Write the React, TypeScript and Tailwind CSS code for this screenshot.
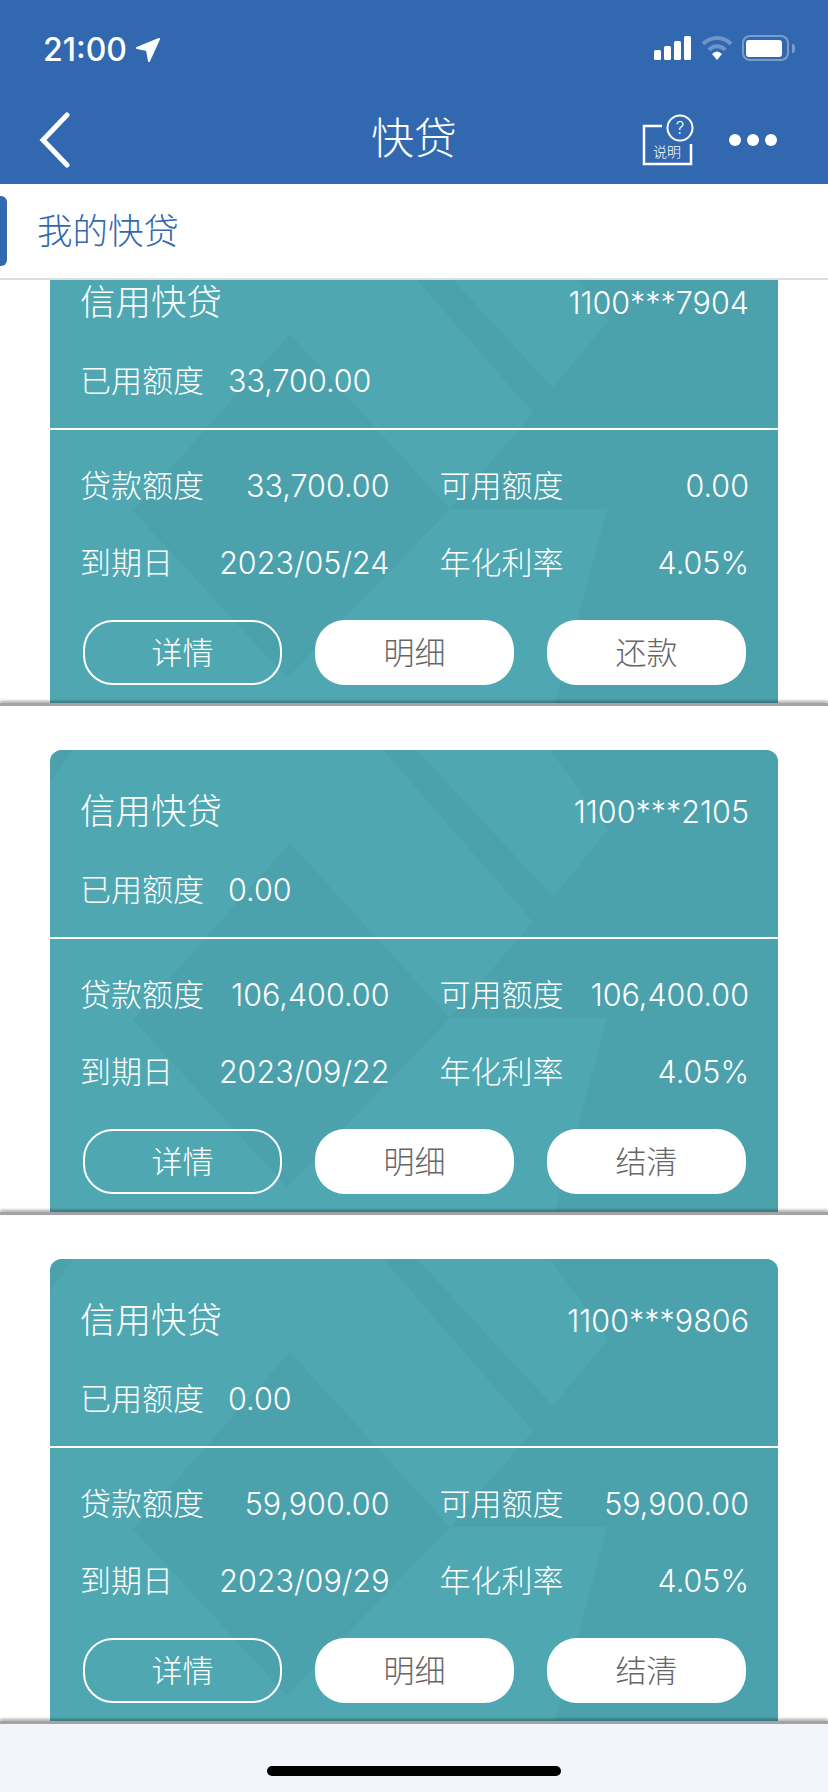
const FONT = "font-['Liberation_Sans','Noto_Sans_CJK_SC',sans-serif]"
const NUM = "font-['Inter','Noto_Sans_CJK_SC',sans-serif] font-light text-[30.5px] pb-[3px]"

const LOANS = [
  { account: '1100***7904', used: '33,700.00', limit: '33,700.00', available: '0.00', due: '2023/05/24', action: '还款' },
  { account: '1100***2105', used: '0.00', limit: '106,400.00', available: '106,400.00', due: '2023/09/22', action: '结清' },
  { account: '1100***9806', used: '0.00', limit: '59,900.00', available: '59,900.00', due: '2023/09/29', action: '结清' },
]

export default function App() {
  return (
    <div className={`w-[828px] h-[1792px] flex flex-col overflow-hidden bg-white ${FONT}`}>
      <header className="relative z-10 h-[184px] shrink-0 bg-[#3268b0] text-white">
        <StatusBar />
        <NavBar />
      </header>

      <div className="relative z-10 h-[96px] shrink-0 flex items-center bg-white border-b-2 border-[#dedede]">
        <span className="w-[7px] h-[70px] rounded-r-md bg-[#3268b0]" />
        <span className="ml-[30px] pt-[3px] text-[35.5px] font-light text-[#3268b0]">我的快贷</span>
      </div>

      <main className="flex-1 overflow-hidden">
        <div className="-mt-[39px]">
          {LOANS.map((loan) => (
            <LoanCard key={loan.account} {...loan} />
          ))}
        </div>
      </main>

      <footer className="relative z-10 h-[68px] shrink-0 bg-[#f2f6fa] pt-[42px] flex justify-center">
        <span className="w-[294px] h-[10px] rounded-full bg-black" />
      </footer>
    </div>
  )
}

function StatusBar() {
  return (
    <div className="h-[100px] flex items-start justify-between pl-[43px] pr-[33px] pt-[32px]">
      <div className="flex items-center gap-[8px]">
        <span className="font-['Inter'] text-[32px] leading-[36px] font-medium">21:00</span>
        <svg width="26" height="26" viewBox="0 0 26 26" fill="white" stroke="white" strokeWidth="2" strokeLinejoin="round">
          <path d="M2 11 L24 2 L14 24 L12 13 Z" />
        </svg>
      </div>
      <div className="flex items-center gap-[9px] pt-[3px]">
        <svg width="38" height="24" viewBox="0 0 38 24" fill="white">
          <rect x="0" y="14" width="7" height="10" rx="1.5" />
          <rect x="10" y="10" width="7" height="14" rx="1.5" />
          <rect x="20" y="5" width="7" height="19" rx="1.5" />
          <rect x="30" y="0" width="7" height="24" rx="1.5" />
        </svg>
        <svg width="32" height="24" viewBox="0 0 32 24" fill="none">
          <path d="M2 8 C10 0 22 0 30 8" stroke="white" strokeOpacity="0.3" strokeWidth="4" />
          <path d="M8 14 C12 9 20 9 24 14" stroke="white" strokeOpacity="0.3" strokeWidth="4" />
          <path d="M11 18 Q16 13 21 18 L16 24 Z" fill="white" />
        </svg>
        <div className="flex items-center gap-[3px]">
          <div className="w-[47px] h-[26px] rounded-[8px] border-2 border-white/35 flex items-center px-[2px]">
            <span className="w-[36px] h-[17px] rounded-[3px] bg-white" />
          </div>
          <span className="w-[3px] h-[9px] rounded-r-sm bg-white/35" />
        </div>
      </div>
    </div>
  )
}

function NavBar() {
  return (
    <div className="relative h-[84px]">
      <svg className="absolute left-[39px] top-[12px]" width="32" height="56" viewBox="0 0 32 56" fill="none" stroke="white" strokeWidth="5" strokeLinecap="round">
        <path d="M28 3 L4 28 L28 53" />
      </svg>
      <h1 className="text-center text-[43px] leading-[78px] font-light">快贷</h1>
      <svg className="absolute left-[642px] top-[13px]" width="54" height="54" viewBox="0 0 54 54" fill="none" stroke="white">
        <path d="M20 13 H2 V51 H49 V31" strokeWidth="2.5" />
        <circle cx="38" cy="15" r="12.5" strokeWidth="2" />
        <text x="38" y="21" textAnchor="middle" fontSize="17" fontWeight="300" fontFamily="Inter" fill="white" stroke="none">?</text>
        <text x="11" y="44" fontSize="14" fontWeight="300" fill="white" stroke="none">说明</text>
      </svg>
      <div className="absolute left-[729px] top-[34px] flex gap-[6px]">
        <span className="w-[12px] h-[12px] rounded-full bg-white" />
        <span className="w-[12px] h-[12px] rounded-full bg-white" />
        <span className="w-[12px] h-[12px] rounded-full bg-white" />
      </div>
    </div>
  )
}

function LoanCard({ account, used, limit, available, due, action }: {
  account: string
  used: string
  limit: string
  available: string
  due: string
  action: string
}) {
  return (
    <section>
      <div className="mx-[50px] relative h-[462px] overflow-hidden rounded-t-[12px] bg-[#4fa8b1] text-white">
        <CardPattern />
        <div className="relative">
          <div className="h-[189px] border-b-2 border-white pl-[30px] pr-[29px] pt-[41px]">
            <div className="flex items-center justify-between h-[44px]">
              <span className="text-[35.5px] font-light">信用快贷</span>
              <span className={NUM}>{account}</span>
            </div>
            <div className="mt-[36px] flex items-center gap-[24px] h-[40px]">
              <span className="text-[31px] font-light">已用额度</span>
              <span className={NUM}>{used}</span>
            </div>
          </div>
          <div className="pl-[30px] pr-[29px] pt-[37px] grid grid-cols-2 gap-x-[50px] gap-y-[37px]">
            <Row label="贷款额度" value={limit} />
            <Row label="可用额度" value={available} />
            <Row label="到期日" value={due} />
            <Row label="年化利率" value="4.05%" />
          </div>
          <div className="mt-[36px] pl-[33px] pr-[32px] grid grid-cols-3 gap-x-[33px]">
            <button type="button" className="h-[65px] pt-[3px] rounded-[30px] border-2 border-white text-[31px] font-light text-white">详情</button>
            <button type="button" className="h-[65px] pt-[3px] rounded-[30px] bg-white text-[31px] font-light text-[#666]">明细</button>
            <button type="button" className="h-[65px] pt-[3px] rounded-[30px] bg-white text-[31px] font-light text-[#666]">{action}</button>
          </div>
        </div>
      </div>
      <div className="relative h-[3px] mb-[44px] bg-[#a3a3a3] shadow-[0_-2px_3px_rgba(0,0,0,0.35)]" />
    </section>
  )
}

function Row({ label, value }: { label: string; value: string }) {
  return (
    <div className="h-[40px] flex items-center justify-between">
      <span className="text-[31px] font-light">{label}</span>
      <span className={NUM}>{value}</span>
    </div>
  )
}

// faint geometric watermark behind the card text
function CardPattern() {
  return (
    <svg className="absolute inset-0" width="728" height="462" viewBox="0 0 728 462" fill="#4ba1ac">
      <path d="M500 0 H728 V462 H505 L557 268 H400 L483 172 L503 147 L558 80 Z" />
      <path d="M333 0 H367 L503 147 L483 172 Z" />
      <path d="M240 93 L83 270 L237 437 L400 268 Z" />
      <path d="M0 0 H23 L0 33 Z" />
    </svg>
  )
}
